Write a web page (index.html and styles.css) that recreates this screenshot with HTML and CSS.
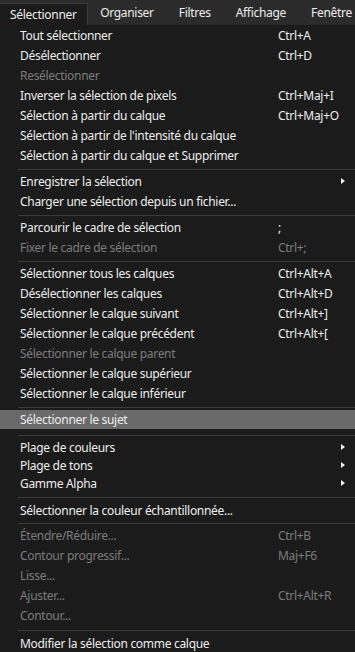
FILE: index.html
```html
<!DOCTYPE html>
<html lang="fr">
<head>
  <meta charset="UTF-8" />
  <meta name="viewport" content="width=device-width, initial-scale=1.0"/>
  <title>Sélectionner</title>
  <link rel="stylesheet" href="styles.css">
</head>
<body>

  <nav class="menubar">
    <div class="tab active">Sélectionner</div>
    <div class="tab">Organiser</div>
    <div class="tab">Filtres</div>
    <div class="tab">Affichage</div>
    <div class="tab">Fenêtre</div>
  </nav>

  <div class="menu">
    <div class="row"><span class="label">Tout sélectionner</span><span class="key">Ctrl+A</span></div>
    <div class="row"><span class="label">Désélectionner</span><span class="key">Ctrl+D</span></div>
    <div class="row off"><span class="label">Resélectionner</span></div>
    <div class="row"><span class="label">Inverser la sélection de pixels</span><span class="key">Ctrl+Maj+I</span></div>
    <div class="row"><span class="label">Sélection à partir du calque</span><span class="key">Ctrl+Maj+O</span></div>
    <div class="row"><span class="label">Sélection à partir de l'intensité du calque</span></div>
    <div class="row"><span class="label">Sélection à partir du calque et Supprimer</span></div>
    <div class="sep"></div>
    <div class="row"><span class="label">Enregistrer la sélection</span><span class="arrow"></span></div>
    <div class="row"><span class="label">Charger une sélection depuis un fichier...</span></div>
    <div class="sep"></div>
    <div class="row"><span class="label">Parcourir le cadre de sélection</span><span class="key">;</span></div>
    <div class="row off"><span class="label">Fixer le cadre de sélection</span><span class="key">Ctrl+;</span></div>
    <div class="sep"></div>
    <div class="row"><span class="label">Sélectionner tous les calques</span><span class="key">Ctrl+Alt+A</span></div>
    <div class="row"><span class="label">Désélectionner les calques</span><span class="key">Ctrl+Alt+D</span></div>
    <div class="row"><span class="label">Sélectionner le calque suivant</span><span class="key">Ctrl+Alt+]</span></div>
    <div class="row"><span class="label">Sélectionner le calque précédent</span><span class="key">Ctrl+Alt+[</span></div>
    <div class="row off"><span class="label">Sélectionner le calque parent</span></div>
    <div class="row"><span class="label">Sélectionner le calque supérieur</span></div>
    <div class="row"><span class="label">Sélectionner le calque inférieur</span></div>
    <div class="sep"></div>
    <div class="row hover"><span class="label">Sélectionner le sujet</span></div>
    <div class="sep wide"></div>
    <div class="row compact"><span class="label">Plage de couleurs</span><span class="arrow"></span></div>
    <div class="row compact"><span class="label">Plage de tons</span><span class="arrow"></span></div>
    <div class="row compact"><span class="label">Gamme Alpha</span><span class="arrow"></span></div>
    <div class="sep mid"></div>
    <div class="row"><span class="label">Sélectionner la couleur échantillonnée...</span></div>
    <div class="sep thin"></div>
    <div class="row off"><span class="label">Étendre/Réduire...</span><span class="key">Ctrl+B</span></div>
    <div class="row off"><span class="label">Contour progressif...</span><span class="key">Maj+F6</span></div>
    <div class="row off"><span class="label">Lisse...</span></div>
    <div class="row off"><span class="label">Ajuster...</span><span class="key">Ctrl+Alt+R</span></div>
    <div class="row off"><span class="label">Contour...</span></div>
    <div class="sep mid"></div>
    <div class="row"><span class="label">Modifier la sélection comme calque</span></div>
  </div>

</body>
</html>
```

FILE: styles.css
```css
body {
  margin: 0;
  background: #1b1b1b;
  font-family: "Noto Sans", "Open Sans", sans-serif;
  font-size: 12px;
  letter-spacing: -0.3px;
  color: #ededed;
  overflow: hidden;
}
.menubar {
  display: flex;
  height: 25px;
  background: #2b2b2b;
  box-sizing: border-box;
  overflow: hidden;
}
.tab {
  padding: 0 12.5px;
  line-height: 25px;
  white-space: nowrap;
}
.tab.active {
  padding: 0 10px 0 10px;
  margin-top: 3px;
  line-height: 21px;
  background: #1b1b1b;
  border-top: 1px solid #3a3a3a;
  border-right: 1px solid #3a3a3a;
}
.menu {
  display: flex;
  flex-direction: column;
}
.row {
  display: grid;
  grid-template-columns: 258px 1fr 14px;
  align-items: center;
  height: 20px;
  padding-left: 20px;
  white-space: nowrap;
}
.row.compact { height: 18px; }
.row.off { color: #7c7c7c; }
.row.hover {
  background: #6a6a6a;
  height: 19px;
  margin-top: 1px;
}
.label { grid-column: 1; }
.key { grid-column: 2; }
.arrow {
  grid-column: 3;
  width: 0;
  height: 0;
  border-top: 3.5px solid transparent;
  border-bottom: 3.5px solid transparent;
  border-left: 4px solid #f0f0f0;
}
.sep {
  margin-left: 18px;
  padding-top: 4px;
  margin-bottom: 1px;
  border-bottom: 1px solid #3a3a3a;
}
.sep.wide { padding-top: 6px; margin-bottom: 2px; }
.sep.mid { padding-top: 5px; margin-bottom: 2px; }
.sep.thin { padding-top: 3px; margin-bottom: 1px; }
```
